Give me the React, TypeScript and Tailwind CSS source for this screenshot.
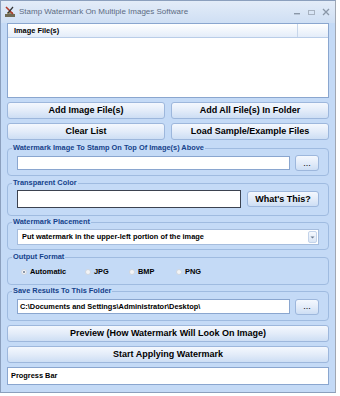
import React from "react";

const font = { fontFamily: '"Liberation Sans", Arial, sans-serif' };

function Btn({ children, className = "" }: { children: React.ReactNode; className?: string }) {
  return (
    <div
      className={
        "flex items-center justify-center rounded-[3px] border border-[#9db7dc] bg-gradient-to-b from-[#f4f8fe] via-[#e3ecf9] to-[#cddef4] text-[9px] font-bold text-black leading-none " +
        className
      }
    >
      {children}
    </div>
  );
}

function Group({ label, h, children }: { label: string; h: string; children: React.ReactNode }) {
  return (
    <fieldset className={"rounded-[4px] border border-[#9fbbe0] px-[9px] " + h}>
      <legend className="ml-[-5px] px-[1px] text-[7.4px] font-bold leading-[8px] text-[#15428b]">{label}</legend>
      {children}
    </fieldset>
  );
}

function Radio({ checked, label, w }: { checked?: boolean; label: string; w: string }) {
  return (
    <div className={"flex items-center " + w}>
      <div className="mr-[3px] flex h-[6px] w-[6px] items-center justify-center rounded-full border border-[#d0d6df] bg-[#f3f4f6]">
        {checked && <div className="h-[2px] w-[2px] rounded-full bg-[#6a7a90]" />}
      </div>
      <span className="text-[7.4px] font-bold text-black">{label}</span>
    </div>
  );
}

export default function App() {
  return (
    <div className="h-[396px] w-[340px] overflow-hidden bg-white" style={font}>
      <div className="flex h-[393px] w-[336px] flex-col border border-[#8b9fbd] border-r-[#a0a7b2] bg-[#c4daf6]">
        {/* title bar */}
        <div className="flex h-[22px] items-center bg-gradient-to-b from-[#e3ecf8] to-[#cfdff4] pl-[3px] pr-[5px]">
          <svg width="12" height="12" viewBox="0 0 12 12" className="mr-[3px]">
            <rect x="1" y="8" width="10" height="3" fill="#6f6a55" />
            <rect x="3" y="6" width="6" height="2" fill="#9c9372" />
            <path d="M2 1 L9 8" stroke="#b23a2a" strokeWidth="1.6" />
            <path d="M9 1 L4 7" stroke="#333" strokeWidth="1.2" />
          </svg>
          <span className="text-[8px] leading-none text-[#5c6b82]">Stamp Watermark On Multiple Images Software</span>
          <div className="ml-auto flex items-center gap-[7px] text-[#8a97a8]">
            <svg width="7" height="7" viewBox="0 0 7 7"><rect x="0" y="4" width="6" height="1.4" fill="#8a97a8" /></svg>
            <svg width="7" height="7" viewBox="0 0 7 7"><rect x="0.5" y="1.5" width="6" height="4" fill="none" stroke="#a7b2c1" strokeWidth="1" /></svg>
            <svg width="8" height="8" viewBox="0 0 8 8"><path d="M1 1 L7 7 M7 1 L1 7" stroke="#8a97a8" strokeWidth="1.3" /></svg>
          </div>
        </div>

        <div className="flex flex-col px-[6px]">
          {/* list */}
          <div className="h-[75px] border border-[#8aa6cf] bg-white">
            <div className="flex h-[14px] border-b border-[#b9cde8] bg-gradient-to-b from-white to-[#e4edf9]">
              <div className="flex w-[290px] items-center border-r border-[#c7d6ea] pl-[6px] text-[7.4px] font-bold text-black">Image File(s)</div>
            </div>
          </div>

          <div className="mt-[4px] flex gap-[6px]">
            <Btn className="h-[17px] w-[158px]">Add Image File(s)</Btn>
            <Btn className="h-[17px] flex-1">Add All File(s) In Folder</Btn>
          </div>
          <div className="mt-[4px] flex gap-[6px]">
            <Btn className="h-[17px] w-[158px]">Clear List</Btn>
            <Btn className="h-[17px] flex-1">Load Sample/Example Files</Btn>
          </div>

          <div className="mt-[4px]">
            <Group label="Watermark Image To Stamp On Top Of Image(s) Above" h="h-[32px]">
              <div className="mt-[3px] flex h-[16px] items-center">
                <div className="h-[14px] w-[273px] border border-[#8aa6cf] bg-white" />
                <Btn className="ml-[5px] h-[16px] w-[24px] font-normal text-[#333]">...</Btn>
              </div>
            </Group>
          </div>

          <div className="mt-[3px]">
            <Group label="Transparent Color" h="h-[37px]">
              <div className="mt-[3px] flex h-[18px] items-center">
                <div className="h-[18px] w-[224px] border border-[#3b4250] bg-white" />
                <Btn className="ml-[6px] h-[16px] w-[72px]">What's This?</Btn>
              </div>
            </Group>
          </div>

          <div className="mt-[2px]">
            <Group label="Watermark Placement" h="h-[32px]">
              <div className="mt-[3px] flex h-[16px] items-center justify-between border border-[#a6bddd] bg-white pl-[4px] pr-[1px]">
                <span className="text-[7.4px] font-bold text-black">Put watermark in the upper-left portion of the image</span>
                <div className="flex h-[12px] w-[9px] items-center justify-center rounded-[2px] border border-[#c3d3ea] bg-gradient-to-b from-[#f5f8fd] to-[#dbe6f5]">
                  <svg width="5" height="3" viewBox="0 0 5 3"><path d="M0.5 0.5 L2.5 2.5 L4.5 0.5" fill="#6b7a90" /></svg>
                </div>
              </div>
            </Group>
          </div>

          <div className="mt-[3px]">
            <Group label="Output Format" h="h-[32px]">
              <div className="mt-[4px] flex h-[14px] items-center pl-[4px]">
                <Radio checked label="Automatic" w="w-[64px]" />
                <Radio label="JPG" w="w-[44px]" />
                <Radio label="BMP" w="w-[47px]" />
                <Radio label="PNG" w="w-[40px]" />
              </div>
            </Group>
          </div>

          <div className="mt-[2px]">
            <Group label="Save Results To This Folder" h="h-[34px]">
              <div className="mt-[3px] flex h-[17px] items-center">
                <div className="flex h-[15px] w-[273px] items-center border border-[#8aa6cf] bg-white pl-[2px] text-[7.4px] font-bold text-black">
                  C:\Documents and Settings\Administrator\Desktop\
                </div>
                <Btn className="ml-[5px] h-[16px] w-[24px] font-normal text-[#333]">...</Btn>
              </div>
            </Group>
          </div>

          <Btn className="mt-[4px] h-[17px]">Preview (How Watermark Will Look On Image)</Btn>
          <Btn className="mt-[4px] h-[17px]">Start Applying Watermark</Btn>
          <div className="mt-[4px] flex h-[18px] items-center border border-[#8aa6cf] bg-white pl-[3px] text-[7.4px] font-bold text-black">
            Progress Bar
          </div>
        </div>
      </div>
    </div>
  );
}
